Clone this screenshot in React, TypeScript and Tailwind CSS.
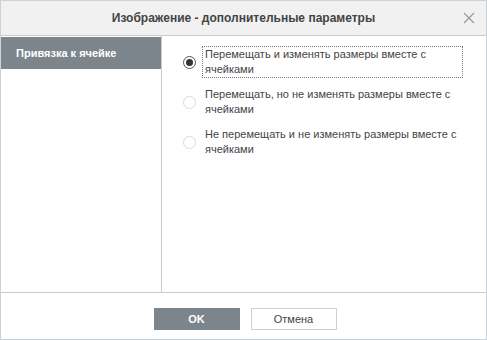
import { useState } from 'react';

// ── Options ────────────────────────────────────────────────────────────────

const OPTIONS = [
  'Перемещать и изменять размеры вместе с ячейками',
  'Перемещать, но не изменять размеры вместе с ячейками',
  'Не перемещать и не изменять размеры вместе с ячейками',
];

function Radio({ checked }: { checked: boolean }) {
  return (
    <span
      className={`flex h-[13px] w-[13px] shrink-0 items-center justify-center rounded-full border bg-white ${
        checked ? 'border-[#555]' : 'border-[#dadada]'
      }`}
    >
      {checked && <span className="h-[7px] w-[7px] rounded-full bg-[#333]" />}
    </span>
  );
}

export default function App() {
  const [selected, setSelected] = useState(0);

  return (
    <div
      className="flex h-[340px] w-[487px] flex-col border border-[#c9d3dc] bg-white text-[#444]"
      style={{ fontFamily: '"Liberation Sans", Arial, sans-serif' }}
    >
      {/* Header */}
      <div className="relative flex h-[35px] shrink-0 items-center justify-center border-b border-[#cbcbcb] bg-[#f1f1f1]">
        <span className="text-[12px] font-bold text-[#444]">Изображение - дополнительные параметры</span>
        <svg
          width="12" height="12" viewBox="0 0 12 12"
          className="absolute right-[11px] top-[11px]"
          fill="none" stroke="#9a9a9a" strokeWidth="1.2"
        >
          <path d="M1 1 L11 11 M11 1 L1 11" />
        </svg>
      </div>

      {/* Body */}
      <div className="flex min-h-0 flex-1">
        <div className="w-[161px] shrink-0 border-r border-[#cbcbcb] pt-[1px]">
          <div className="flex h-[32px] items-center bg-[#7d858c] pl-[15px] text-[11px] font-bold text-white">
            Привязка к ячейке
          </div>
        </div>

        <div className="flex flex-col gap-[8px] pl-[21px] pt-[10px]">
          {OPTIONS.map((label, i) => (
            <label
              key={label}
              onClick={() => setSelected(i)}
              className="flex cursor-pointer items-center gap-[6px]"
            >
              <Radio checked={selected === i} />
              <span
                className={`w-[261px] border px-[2px] text-[11px] leading-[15px] text-[#444] ${
                  i === 0 ? 'border-dotted border-[#777]' : 'border-transparent'
                }`}
              >
                {label}
              </span>
            </label>
          ))}
        </div>
      </div>

      {/* Footer */}
      <div className="flex h-[47px] shrink-0 justify-center gap-[11px] border-t border-[#cbcbcb] pl-[3px] pt-[15px]">
        <button className="h-[22px] w-[86px] bg-[#7d858c] text-[11px] font-bold text-white">OK</button>
        <button className="h-[22px] w-[86px] border border-[#cfcfcf] bg-white text-[11px] text-[#444]">
          Отмена
        </button>
      </div>
    </div>
  );
}
